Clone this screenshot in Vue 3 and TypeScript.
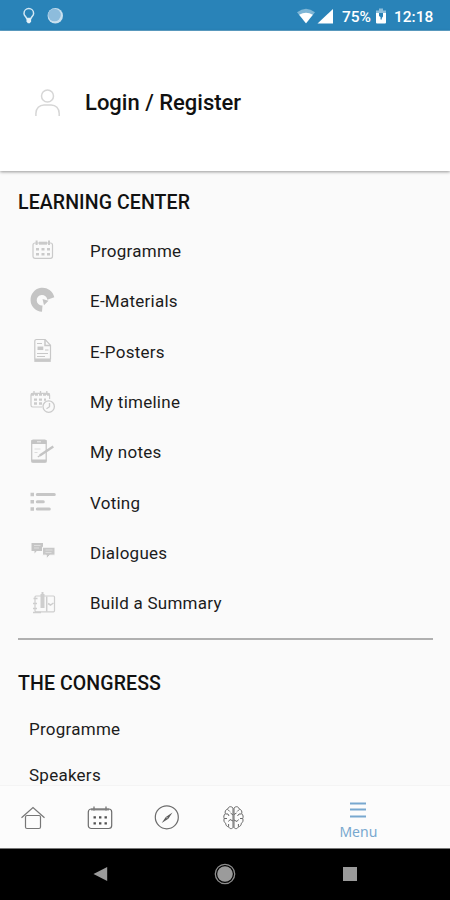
<script setup lang="ts">
interface LearningItem {
  label: string
  icon: string
}

const learning: LearningItem[] = [
  { label: 'Programme', icon: 'calendar' },
  { label: 'E-Materials', icon: 'disc' },
  { label: 'E-Posters', icon: 'poster' },
  { label: 'My timeline', icon: 'timeline' },
  { label: 'My notes', icon: 'notes' },
  { label: 'Voting', icon: 'voting' },
  { label: 'Dialogues', icon: 'dialogues' },
  { label: 'Build a Summary', icon: 'summary' },
]

const congress: string[] = ['Programme', 'Speakers']
</script>

<template>
  <div class="screen">
    <header class="status">
      <svg class="status-left" width="50" height="30" viewBox="0 0 50 30">
        <path d="M6.700 18.500C6.200 16.700 4 15.800 4 13.400a4.800 4.800 0 0 1 9.600 0c0 2.400-2.200 3.300-2.700 5.100z" fill="none" stroke="#d3e8f4" stroke-width="1.500" />
        <path d="M6.500 18.500h4.600v3l-1.300 1.800H7.800l-1.300-1.800z" fill="#e4f1f8" />
        <circle cx="35.300" cy="15.800" r="7.700" fill="#c9e0ef" />
        <circle cx="34.500" cy="15" r="6.300" fill="#8dbcdc" />
      </svg>
      <div class="status-right">
        <svg width="38" height="30" viewBox="0 0 38 30">
          <path d="M0 12.300Q9 5 18 12.300L9 23.500z" fill="#7fb6d6" />
          <path d="M2.200 14.700Q9 10.800 15.800 14.700L9 23.300z" fill="#fff" />
          <path d="M20.500 23.500L36 9v14.500z" fill="#fff" />
        </svg>
        <span class="percent">75%</span>
        <svg width="10" height="30" viewBox="0 0 10 30">
          <path d="M3 8.500h4v2H10v4H0v-4h3z" fill="#8fbfdb" />
          <path d="M0 13h10v9.500q0 1-1 1H1q-1 0-1-1z" fill="#fff" />
          <path d="M3 13h4v3.500L5.800 18v1.500H4.500V17L3 16z" fill="#2983b8" />
        </svg>
        <span class="clock">12:18</span>
      </div>
    </header>

    <section class="account">
      <svg width="26" height="28" viewBox="0 0 26 28" fill="none" stroke="#d6d6d6" stroke-width="1.500">
        <circle cx="12.500" cy="7" r="6" />
        <path d="M.9 27v-2.500C.9 19.400 4.500 16 9 16h7.200c4.500 0 8 3.400 8 8.500V27" />
      </svg>
      <span class="login">Login / Register</span>
    </section>

    <main class="content">
      <h2 class="heading">LEARNING CENTER</h2>
      <ul class="learning">
        <li v-for="item in learning" :key="item.label">
          <svg class="icon" width="30" height="30" viewBox="0 0 30 30">
            <g v-if="item.icon === 'calendar'" fill="none" stroke="#cacaca">
              <rect x="5" y="7" width="19.500" height="15.300" rx="2" stroke-width="1.200" />
              <path d="M11 7.200h8" stroke-width="3" />
              <path d="M8.600 4.500v4.500M21 4.500v4.500" stroke-width="2" />
              <path d="M8 13.200h14M8 18.200h14" stroke-width="2.600" stroke-dasharray="3 2.500" />
            </g>
            <g v-else-if="item.icon === 'disc'" fill="#c4c4c4">
              <path d="M26.300 11.300A12 12 0 1 0 14 25.700l.5-6.200A5.300 5.300 0 1 1 19.300 13.800z" />
              <path d="M14.500 13l6 1.800-4.500 4.400z" />
            </g>
            <g v-else-if="item.icon === 'poster'" fill="none" stroke="#c8c8c8">
              <path d="M8.500 2.500h8.700l5.300 5.800V22H6.800V4.200q0-1.700 1.700-1.700z" stroke-width="1.200" />
              <path d="M6.300 23.500h16.500" stroke-width="2.800" />
              <path d="M17 2.800v5.700h5.300" stroke-width="1.500" />
              <path d="M9.500 11.300h5.800" stroke-width="3.500" />
              <path d="M9 6.500h5M17 13h3.500M9 16.500h11M9 19.500h8" stroke-width="1.200" />
            </g>
            <g v-else-if="item.icon === 'timeline'" fill="none" stroke="#cbcbcb">
              <path d="M14 20H4.700q-1.700 0-1.700-1.700V8q0-1.700 1.700-1.700h15.200q1.700 0 1.700 1.700v4" stroke-width="1.200" />
              <path d="M3 7.500h18.500" stroke-width="2.500" stroke-dasharray="3 1" />
              <path d="M6 4v4M12.500 4v4M18.800 4v4" stroke-width="1.300" />
              <path d="M6 12.700h12M6 16.500h8" stroke-width="2.300" stroke-dasharray="3 2" />
              <circle cx="20.700" cy="19.600" r="5.700" fill="#fafafa" stroke-width="1.300" />
              <path d="M21.500 16v3.700l-3 2" stroke-width="1.300" />
            </g>
            <g v-else-if="item.icon === 'notes'" fill="none" stroke="#c4c4c4">
              <rect x="3.700" y="3" width="14.500" height="22.200" rx="1.500" stroke-width="1.200" />
              <path d="M3.500 5h15" stroke-width="4" />
              <path d="M3.500 24h15" stroke-width="3" />
              <path d="M9 4.800h4" stroke="#eee" stroke-width="1" />
              <path d="M6.500 12h6M6.500 15.500h3" stroke="#dcdcdc" stroke-width="1" />
              <path d="M11.800 18.600L25.300 9.500" stroke-width="2.400" />
              <path d="M9.800 20l2.300-1.500" stroke-width="1.400" />
            </g>
            <g v-else-if="item.icon === 'voting'" fill="none" stroke="#c6c6c6">
              <path d="M2.500 6.500h3.500M2.500 13.700h3.500M2.500 21h3.500" stroke-width="3.500" />
              <path d="M9.300 6.500h17M9.300 13.700h6M9.300 21h12" stroke-width="3" stroke-linecap="round" />
            </g>
            <g v-else-if="item.icon === 'dialogues'">
              <path d="M3.500 5H15v8H8.700L6.500 15.500V13h-3z" fill="#c5c5c5" />
              <path d="M6 7.500h6.500M6 10h5" stroke="#dedede" />
              <path d="M14.500 9.200H27v8h-5.200L18.300 21v-3.800h-3.800z" fill="#c8c8c8" stroke="#fafafa" />
              <path d="M17.500 12h7M17.500 14.500h6" stroke="#dedede" />
            </g>
            <g v-else fill="none" stroke="#cecece">
              <rect x="7" y="8" width="19.500" height="15.800" rx="1" stroke-width="1.200" />
              <path d="M14.500 20V6" stroke-width="4" />
              <path d="M14.500 7V4" stroke-width="2" />
              <path d="M18.700 8.500v15M5.500 10.500h4M5 15.500h4M5 20.500h4M5 24.500h8" stroke-width="1.500" />
              <path d="M20 15.500l2.500 1.500 3-2" stroke-width="1.500" />
            </g>
          </svg>
          <span>{{ item.label }}</span>
        </li>
      </ul>
      <div class="divider"></div>
      <h2 class="heading second">THE CONGRESS</h2>
      <ul class="congress">
        <li v-for="label in congress" :key="label">{{ label }}</li>
      </ul>
    </main>

    <nav class="tabs">
      <div class="tab">
        <svg width="26" height="26" viewBox="0 0 26 26" fill="none" stroke="#777" stroke-width="1.200">
          <path d="M1.500 12.700L13 2.500l11.500 10.200" />
          <rect x="5.500" y="10.500" width="15" height="13" rx="1.500" />
        </svg>
      </div>
      <div class="tab">
        <svg width="26" height="26" viewBox="0 0 26 26" fill="none" stroke="#6c6c6c" stroke-width="1.200">
          <rect x="1.300" y="4" width="23.400" height="19.500" rx="3" />
          <path d="M7 1.500v4M19 1.500v4" />
          <path d="M4 4.500h18" stroke-width="1.800" stroke="#808080" />
          <path d="M6.500 12.400h13.500M6.500 18.300h13.500" stroke="#505050" stroke-width="2.300" stroke-dasharray="2.400 3.100" />
        </svg>
      </div>
      <div class="tab">
        <svg width="26" height="26" viewBox="0 0 26 26">
          <circle cx="12.800" cy="12.300" r="11.500" fill="none" stroke="#6c6c6c" stroke-width="1.200" />
          <path d="M18.500 7.500l-4.200 6.300-6.600 4.200 4.100-6.100z" fill="#5c5c5c" />
          <circle cx="13" cy="12.800" r=".8" fill="#bbb" />
        </svg>
      </div>
      <div class="tab">
        <svg width="26" height="26" viewBox="0 0 26 26" fill="none" stroke="#686868" stroke-width="1" stroke-linejoin="round">
          <path d="M13 3C11 .8 8.400 1.500 7.800 4 5.500 4.500 4.700 6.700 5.300 8.500 3.700 10 3.500 12 4.200 13.500 3.500 15.500 4.100 17.500 5.700 18.300 5.700 20.500 7 21.700 8.600 21.700 9.600 24.300 12.200 24 13 22.500z" />
          <path d="M14 3c2-2.200 4.600-1.500 5.200 1 2.300.5 3.100 2.700 2.500 4.500 1.600 1.500 1.700 3.500 1 5 .8 2 .2 4-1.400 4.800 0 2.200-1.400 3.400-2.900 3.400-1 2.600-3.600 2.300-4.400.8z" />
          <path d="M7.800 4.500l2 2M5.300 9h2.700l1 2M4.200 13.500H7M13 10l-2.500-2M13 16l-3-1.500-1.500 2M8.600 21.500V19M19.200 4.500l-2 2M21.700 9h-2.700l-1.500 2M22.700 13.500H20M14 9.500L16.500 8M14 15l3 1.500 1.500-2M18.400 21.500V19" />
        </svg>
      </div>
      <div class="tab menu">
        <svg width="18" height="16" viewBox="0 0 18 16">
          <path d="M1 1.500h16M1 7.500h16M1 14.500h16" stroke="#78a8cf" stroke-width="1.900" />
        </svg>
        <span>Menu</span>
      </div>
    </nav>

    <footer class="system">
      <svg width="16" height="18" viewBox="0 0 16 18"><path d="M1.500 9L15.200 2v14z" fill="#9b9b9b" /></svg>
      <svg width="24" height="24" viewBox="0 0 24 24">
        <circle cx="12" cy="12" r="9.700" fill="none" stroke="#8d8d8d" stroke-width="1.300" />
        <circle cx="12" cy="12" r="7.800" fill="#9b9b9b" />
      </svg>
      <svg width="16" height="18" viewBox="0 0 16 18"><path d="M1 2h14v14H1z" fill="#9b9b9b" /></svg>
    </footer>
  </div>
</template>

<style>
body {
  background: #fafafa;
}
</style>

<style scoped>
.screen {
  width: 450px;
  height: 900px;
  display: flex;
  flex-direction: column;
  overflow: hidden;
  background: #fafafa;
  color: #111;
  font-family: Roboto, "Liberation Sans", sans-serif;
}
svg {
  display: block;
  flex: none;
}
ul {
  list-style: none;
  margin: 0;
  padding: 0;
}
.status {
  flex: none;
  box-sizing: border-box;
  height: 31px;
  padding: 0 17px 0 20px;
  display: flex;
  justify-content: space-between;
  background: #2983b8;
  border-bottom: 1px solid #5fa3cb;
}
.status-right {
  display: flex;
  color: #fff;
  font-size: 15.500px;
  font-weight: 500;
  line-height: 34px;
}
.status-right svg {
  margin-left: -1px;
}
.percent {
  width: 30px;
  margin: 0 5px 0 7px;
}
.clock {
  width: 39px;
  margin-left: 8px;
  white-space: nowrap;
}
.account {
  flex: none;
  box-sizing: border-box;
  height: 140px;
  padding: 3px 0 0 35px;
  display: flex;
  align-items: center;
  gap: 24px;
  background: #fff;
  box-shadow: 0 1px 3px rgba(0, 0, 0, 0.4);
}
.login {
  font-size: 22px;
  font-weight: 500;
  line-height: 28px;
}
.content {
  flex: 1;
  min-height: 0;
  overflow: hidden;
  padding: 18px 17px 0 18px;
}
.heading {
  margin: 0;
  font-size: 19.500px;
  font-weight: 500;
  line-height: 28px;
  letter-spacing: 0.100px;
}
.learning {
  padding: 9px 0 0 10px;
}
.learning li {
  height: 50.300px;
  display: flex;
  align-items: center;
  gap: 32px;
}
.learning li,
.congress li {
  color: #1c1c1c;
  font-size: 17px;
  letter-spacing: 0.250px;
}
.divider {
  height: 2px;
  margin-top: 10px;
  background: #b0b0b0;
}
.second {
  margin-top: 30px;
}
.congress {
  padding: 9px 0 0 11px;
}
.congress li {
  height: 45.500px;
  line-height: 45.500px;
}
.tabs {
  flex: none;
  box-sizing: border-box;
  height: 63px;
  padding-top: 2px;
  display: grid;
  grid-template-columns: repeat(4, 66.700px) 1fr;
  border-top: 1px solid #f4f4f4;
  background: #fcfcfc;
}
.tab {
  display: flex;
  align-items: center;
  justify-content: center;
}
.menu {
  padding-top: 7px;
  flex-direction: column;
  color: #78a8cf;
  font-family: "Noto Sans", sans-serif;
  font-size: 14px;
  line-height: 20px;
  gap: 4px;
}
.system {
  flex: none;
  box-sizing: border-box;
  height: 52px;
  padding: 0 92px 2px;
  display: flex;
  align-items: center;
  justify-content: space-between;
  background: #000;
  border-top: 1px solid #777;
}
</style>
